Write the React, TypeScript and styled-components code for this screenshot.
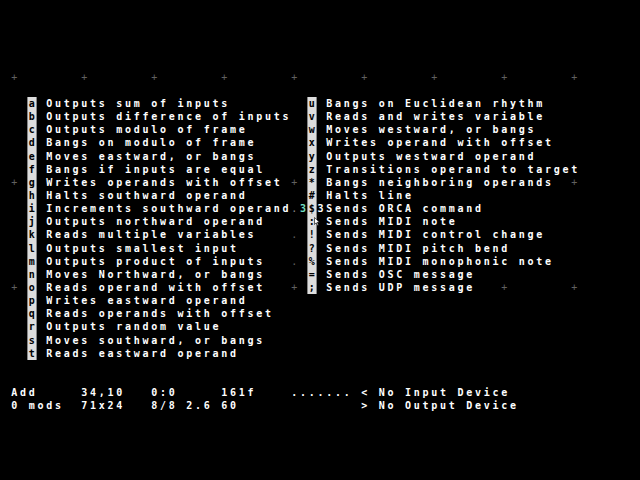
import { createGlobalStyle } from 'styled-components';
import styled from 'styled-components';

const COLS = 71;
const CELL_W = 8.75;
const CELL_H = 13.15;

type Tone = 'hi' | 'med' | 'low' | 'inv' | 'accent';
type Cell = { ch: string; tone: Tone };

const leftOps: [string, string][] = [
  ['a', 'Outputs sum of inputs'],
  ['b', 'Outputs difference of inputs'],
  ['c', 'Outputs modulo of frame'],
  ['d', 'Bangs on modulo of frame'],
  ['e', 'Moves eastward, or bangs'],
  ['f', 'Bangs if inputs are equal'],
  ['g', 'Writes operands with offset'],
  ['h', 'Halts southward operand'],
  ['i', 'Increments southward operand'],
  ['j', 'Outputs northward operand'],
  ['k', 'Reads multiple variables'],
  ['l', 'Outputs smallest input'],
  ['m', 'Outputs product of inputs'],
  ['n', 'Moves Northward, or bangs'],
  ['o', 'Reads operand with offset'],
  ['p', 'Writes eastward operand'],
  ['q', 'Reads operands with offset'],
  ['r', 'Outputs random value'],
  ['s', 'Moves southward, or bangs'],
  ['t', 'Reads eastward operand'],
];

const rightOps: [string, string][] = [
  ['u', 'Bangs on Euclidean rhythm'],
  ['v', 'Reads and writes variable'],
  ['w', 'Moves westward, or bangs'],
  ['x', 'Writes operand with offset'],
  ['y', 'Outputs westward operand'],
  ['z', 'Transitions operand to target'],
  ['*', 'Bangs neighboring operands'],
  ['#', 'Halts line'],
  ['$', 'Sends ORCA command'],
  [':', 'Sends MIDI note'],
  ['!', 'Sends MIDI control change'],
  ['?', 'Sends MIDI pitch bend'],
  ['%', 'Sends MIDI monophonic note'],
  ['=', 'Sends OSC message'],
  [';', 'Sends UDP message'],
];

function buildGrid(): Cell[][] {
  const rows: Cell[][] = [];
  for (let r = 0; r < 26; r++) {
    const row: Cell[] = [];
    for (let c = 0; c < COLS; c++) {
      const cross = r < 24 && r % 8 === 0 && c % 8 === 0;
      row.push({ ch: cross ? '+' : ' ', tone: 'low' });
    }
    rows.push(row);
  }
  const write = (r: number, c: number, s: string, tone: Tone = 'hi') => {
    [...s].forEach((ch, i) => {
      if (c + i < COLS) rows[r][c + i] = { ch, tone };
    });
  };

  // grid dots around the cursor column
  write(10, 32, '.', 'med');
  write(12, 32, '.', 'low');
  write(14, 32, '.', 'low');

  leftOps.forEach(([k, d], i) => {
    write(2 + i, 2, k, 'inv');
    write(2 + i, 4, d);
  });
  rightOps.forEach(([k, d], i) => {
    write(2 + i, 34, k, 'inv');
    write(2 + i, 36, d);
  });

  write(10, 33, '3', 'accent');
  write(10, 35, '3');

  // interface lines
  write(24, 0, 'Add');
  write(24, 8, '34,10');
  write(24, 16, '0:0');
  write(24, 24, '161f');
  write(24, 32, '.......');
  write(24, 40, '<');
  write(24, 42, 'No Input Device');
  write(25, 0, '0 mods');
  write(25, 8, '71x24');
  write(25, 16, '8/8');
  write(25, 20, '2.6');
  write(25, 24, '60');
  write(25, 40, '>');
  write(25, 42, 'No Output Device');

  return rows;
}

const GlobalStyle = createGlobalStyle`
  html, body {
    margin: 0;
    padding: 0;
    background: #000;
  }
`;

const Screen = styled.div`
  position: relative;
  width: 640px;
  height: 480px;
  box-sizing: border-box;
  padding: 70.7px 0 0 10px;
  background: #000;
  font-family: 'DejaVu Sans Mono', 'Liberation Mono', monospace;
  font-weight: bold;
  font-size: 10px;
  overflow: hidden;
`;

const Line = styled.div`
  display: flex;
  height: ${CELL_H}px;
`;

const toneColor: Record<Tone, string> = {
  hi: '#ffffff',
  med: '#8a8a8a',
  low: '#606060',
  inv: '#000000',
  accent: '#72dec2',
};

const Glyph = styled.span<{ $tone: Tone }>`
  flex: 0 0 ${CELL_W}px;
  width: ${CELL_W}px;
  height: ${CELL_H}px;
  line-height: ${CELL_H}px;
  text-align: center;
  white-space: pre;
  color: ${p => toneColor[p.$tone]};
  background: ${p => (p.$tone === 'inv' ? '#dddddd' : 'transparent')};
  box-shadow: ${p => (p.$tone === 'inv' ? '-0.6px 0 0 #dddddd, 0.6px 0 0 #dddddd' : 'none')};
  font-weight: ${p => (p.$tone === 'low' || p.$tone === 'med' ? 'normal' : 'bold')};
`;

const Pointer = styled.svg`
  position: absolute;
  left: 314px;
  top: 217px;
  width: 6px;
  height: 9px;
`;

const grid = buildGrid();

export default function App() {
  return (
    <>
      <GlobalStyle />
      <Screen>
        {grid.map((row, r) => (
          <Line key={r}>
            {row.map((cell, c) => (
              <Glyph key={c} $tone={cell.tone}>
                {cell.ch}
              </Glyph>
            ))}
          </Line>
        ))}
        <Pointer viewBox="0 0 6 9">
          <path d="M0.5 0.5 L0.5 7.5 L2.2 5.8 L3.6 8.5 L4.6 8 L3.3 5.3 L5.5 5.3 Z" fill="#fff" stroke="#000" strokeWidth="0.6" />
        </Pointer>
      </Screen>
    </>
  );
}
